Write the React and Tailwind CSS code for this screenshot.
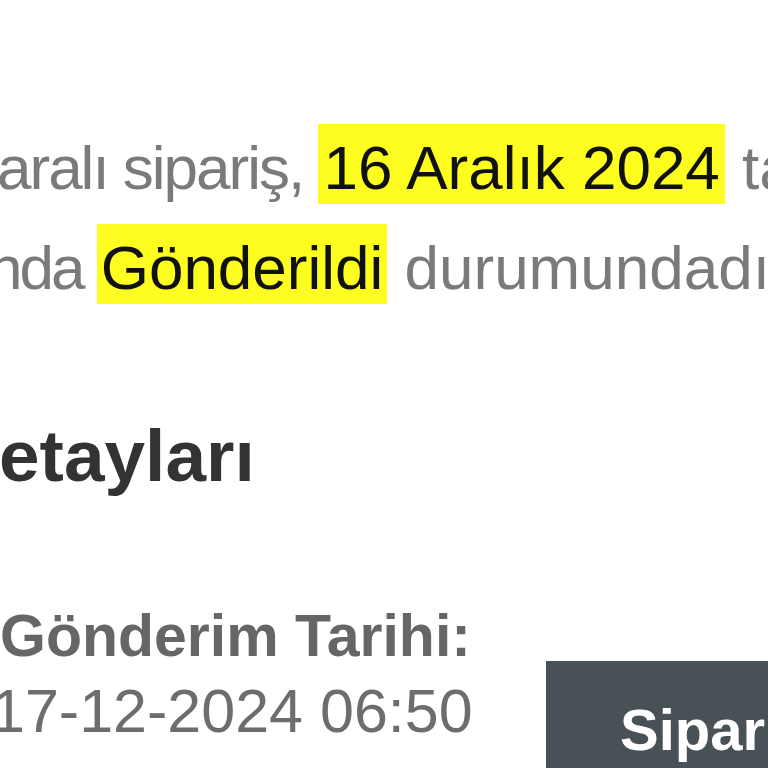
import React from "react";

export default function App() {
  return (
    <div className="w-[768px] h-[768px] overflow-hidden bg-white font-['Liberation_Sans',Arial,sans-serif]">
      {/* sipariş durumu metni */}
      <div className="pt-[118px] text-[62px] leading-[100px] text-[#7a7a7a] whitespace-nowrap">
        <p className="-ml-[3px]">
          <span className="tracking-[-2px]">aralı sipariş, </span>
          <span className="bg-[#fdfd1f] text-[#111] pl-[5px] pr-[5px] pt-[9px] pb-[2px]">
            16 Aralık 2024
          </span>{" "}
          tarihinde oluşturuldu ve şu a
        </p>
        <p className="-ml-[12px]">
          <span className="tracking-[-3px]">nda </span>
          <span className="bg-[#fdfd1f] text-[#111] pl-[4px] pr-[4px] pt-[9px] pb-[2px]">
            Gönderildi
          </span>{" "}
          durumundadır.
        </p>
      </div>

      {/* başlık */}
      <h2 className="mt-[101px] -ml-[1px] text-[73px] leading-[73px] font-bold text-[#333] whitespace-nowrap">
        etayları
      </h2>

      {/* gönderim tarihi + buton */}
      <div className="mt-[107px] flex items-start whitespace-nowrap">
        <div className="w-[546px] shrink-0">
          <div className="text-[59px] leading-[75px] font-bold text-[#666]">
            Gönderim Tarihi:
          </div>
          <div className="-ml-[9px] text-[61px] leading-[75px] text-[#6d6d6d]">
            17-12-2024 06:50
          </div>
        </div>
        <button className="mt-[62px] shrink-0 bg-[#485156] text-white font-bold text-[58px] leading-none pl-[74px] pr-[74px] pt-[40px] pb-[40px] text-left">
          Siparişi Takip Et
        </button>
      </div>
    </div>
  );
}
